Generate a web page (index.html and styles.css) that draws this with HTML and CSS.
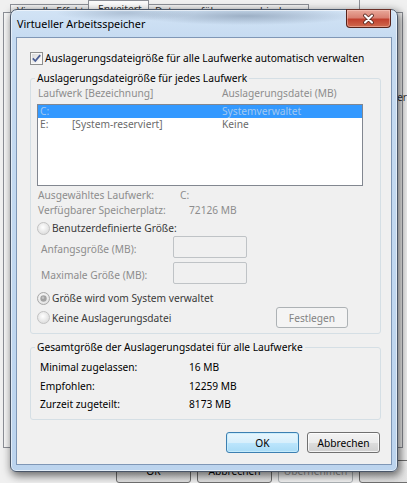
FILE: index.html
```html
<!DOCTYPE html>
<html lang="de">
<head>
<meta charset="utf-8">
<title>Virtueller Arbeitsspeicher</title>
<link rel="stylesheet" href="styles.css">
</head>
<body>
<div class="desk">
  <div class="behind">
    <div class="tabs">
      <div class="tab t1">Visuelle Effekte</div>
      <div class="tab t2 tab-sel">Erweitert</div>
      <div class="tab t3">Datenausführungsverhinderung</div>
      <div class="tab-gap"></div>
    </div>
    <div class="page"></div>
    <div class="behind-buttons">
      <div class="bbtn">OK</div>
      <div class="bbtn">Abbrechen</div>
      <div class="bbtn bdis">Übernehmen</div>
      <div class="bbtn"></div>
    </div>
    <span class="peek">er</span>
  </div>

  <div class="window">
    <div class="titlebar">
      <span class="title">Virtueller Arbeitsspeicher</span>
      <div class="close">
        <svg width="15" height="12" viewBox="0 0 15 12">
          <path d="M4 2.5 L11 9.5 M11 2.5 L4 9.5" stroke="#5a2a22" stroke-width="3.8" stroke-linecap="round" fill="none"/>
          <path d="M4 2.5 L11 9.5 M11 2.5 L4 9.5" stroke="#ffffff" stroke-width="2.1" stroke-linecap="round" fill="none"/>
        </svg>
      </div>
    </div>
    <div class="client">
      <div class="check-row">
        <svg class="chk" width="13" height="13" viewBox="0 0 13 13">
          <defs>
            <linearGradient id="cg1" x1="0" y1="0" x2="1" y2="1">
              <stop offset="0" stop-color="#d9d9d9"/>
              <stop offset="1" stop-color="#fdfdfd"/>
            </linearGradient>
          </defs>
          <rect x="0.5" y="0.5" width="12" height="12" fill="#f7f7f7" stroke="#8e8f8f"/>
          <rect x="2" y="2" width="9" height="9" fill="url(#cg1)"/>
          <path d="M2.8 6.4 L5.3 9 L10.2 3.1" fill="none" stroke="#4b5e94" stroke-width="1.8"/>
        </svg>
        <span>Auslagerungsdateigröße für alle Laufwerke automatisch verwalten</span>
      </div>

      <fieldset class="group g1">
        <legend>Auslagerungsdateigröße für jedes Laufwerk</legend>
        <div class="head">
          <span class="h1">Laufwerk [Bezeichnung]</span>
          <span>Auslagerungsdatei (MB)</span>
        </div>
        <div class="list">
          <div class="row sel"><span class="c1">C:</span><span class="c2"></span><span>Systemverwaltet</span></div>
          <div class="row"><span class="c1">E:</span><span class="c2">[System-reserviert]</span><span>Keine</span></div>
        </div>
        <div class="info first"><span class="lbl">Ausgewähltes Laufwerk:</span><span>C:</span></div>
        <div class="info"><span class="lbl">Verfügbarer Speicherplatz:</span><span class="v2">72126 MB</span></div>

        <div class="radio-row r1">
          <svg width="13" height="13" viewBox="0 0 13 13">
            <defs>
              <radialGradient id="rg1" cx="0.45" cy="0.4" r="0.6">
                <stop offset="0" stop-color="#ffffff"/>
                <stop offset="1" stop-color="#dcdcdc"/>
              </radialGradient>
            </defs>
            <circle cx="6.5" cy="6.5" r="6" fill="url(#rg1)" stroke="#c2c2c2"/>
          </svg>
          <span>Benutzerdefinierte Größe:</span>
        </div>
        <div class="field f1"><span class="flbl">Anfangsgröße (MB):</span><div class="input"></div></div>
        <div class="field f2"><span class="flbl">Maximale Größe (MB):</span><div class="input"></div></div>
        <div class="radio-row r2">
          <svg width="13" height="13" viewBox="0 0 13 13">
            <defs>
              <radialGradient id="rg2" cx="0.45" cy="0.4" r="0.6">
                <stop offset="0" stop-color="#ffffff"/>
                <stop offset="1" stop-color="#e0e0e0"/>
              </radialGradient>
            </defs>
            <circle cx="6.5" cy="6.5" r="6" fill="url(#rg2)" stroke="#a8a8a8"/>
            <circle cx="6.5" cy="6.5" r="3.2" fill="#a2a2a2"/>
            <circle cx="6" cy="5.8" r="1.3" fill="#c4c4c4"/>
          </svg>
          <span>Größe wird vom System verwaltet</span>
        </div>
        <div class="radio-row r3">
          <svg width="13" height="13" viewBox="0 0 13 13">
            <defs>
              <radialGradient id="rg3" cx="0.45" cy="0.4" r="0.6">
                <stop offset="0" stop-color="#ffffff"/>
                <stop offset="1" stop-color="#dcdcdc"/>
              </radialGradient>
            </defs>
            <circle cx="6.5" cy="6.5" r="6" fill="url(#rg3)" stroke="#c2c2c2"/>
          </svg>
          <span>Keine Auslagerungsdatei</span>
          <button class="btn btn-dis" disabled>Festlegen</button>
        </div>
      </fieldset>

      <fieldset class="group g2">
        <legend>Gesamtgröße der Auslagerungsdatei für alle Laufwerke</legend>
        <div class="sum"><span class="slbl">Minimal zugelassen:</span><span>16 MB</span></div>
        <div class="sum"><span class="slbl">Empfohlen:</span><span>12259 MB</span></div>
        <div class="sum"><span class="slbl">Zurzeit zugeteilt:</span><span>8173 MB</span></div>
      </fieldset>

      <div class="buttons">
        <button class="btn btn-default">OK</button>
        <button class="btn">Abbrechen</button>
      </div>
    </div>
  </div>
</div>
</body>
</html>
```

FILE: styles.css
```css
* { box-sizing: border-box; }

html, body {
  margin: 0;
  padding: 0;
}

body {
  width: 407px;
  height: 483px;
  overflow: hidden;
  background: #ececec;
  font-family: "Noto Sans", "Open Sans", sans-serif;
  font-size: 10.2px;
  color: #000;
}

.desk {
  position: relative;
  width: 407px;
  height: 483px;
  overflow: hidden;
}

/* ---------- window in the background ---------- */
.behind {
  position: absolute;
  left: 0;
  top: 0;
  width: 407px;
  height: 483px;
  background: #f0f0f0;
  display: flex;
  flex-direction: column;
}

.tabs {
  display: flex;
  align-items: flex-end;
  height: 12px;
  margin-left: 10px;
}

.tab {
  height: 8px;
  border: 1px solid #8c8f96;
  border-bottom: none;
  background: linear-gradient(#f4f4f4, #e4e4e4);
  color: #333;
  line-height: 11px;
  padding-left: 6px;
  padding-top: 1px;
  overflow: hidden;
  white-space: nowrap;
}

.t1 { width: 79px; }
.t2 { width: 61px; margin-left: -1px; }
.t3 { width: 161px; margin-left: -1px; }

.tab-sel {
  height: 12px;
  background: #fbfbfb;
  padding-left: 9px;
  padding-top: 3px;
}

.tab-gap {
  width: 51px;
  height: 12px;
  border-right: 1px solid #8c8f96;
}

.page {
  height: 445px;
  margin-left: 3px;
  margin-right: 4px;
  border: 1px solid #8c8f96;
  background: #f7f7f7;
}

.behind-buttons {
  display: flex;
  gap: 6px;
  margin: 12px 0 0 116px;
}

.bbtn {
  width: 75px;
  height: 23px;
  flex: none;
  border: 1px solid #707070;
  border-radius: 3px;
  background: linear-gradient(#f2f2f2, #e2e2e2);
  text-align: center;
  line-height: 17px;
  padding-top: 2px;
  color: #000;
}

.bdis {
  border-color: #adb2b5;
  color: #9a9a9a;
  background: #f4f4f4;
}

.peek {
  position: absolute;
  left: 397px;
  top: 90px;
  color: #333;
}

/* ---------- dialog window ---------- */
.window {
  position: absolute;
  left: 10px;
  top: 9px;
  width: 388px;
  height: 463px;
  display: flex;
  flex-direction: column;
  border: 1px solid #4a5668;
  border-radius: 7px 7px 6px 6px;
  background:
    radial-gradient(ellipse 110px 9px at 235px 6px, rgba(95, 115, 140, 0.45), rgba(95, 115, 140, 0)),
    radial-gradient(ellipse 70px 8px at 115px 3px, rgba(110, 130, 155, 0.35), rgba(110, 130, 155, 0)),
    linear-gradient(180deg, #d2e3f5 0, #c6dbf1 28px, #bcd4ee 100%);
  box-shadow:
    inset 0 0 0 1px rgba(255, 255, 255, 0.55),
    2px 3px 9px 1px rgba(0, 0, 0, 0.55);
}

.titlebar {
  display: flex;
  align-items: flex-start;
  height: 27px;
  flex: none;
}

.title {
  padding: 7px 0 0 6px;
  line-height: 14px;
  font-size: 10.8px;
  color: #000;
}

.close {
  margin: -1px 6px 0 auto;
  width: 45px;
  height: 19px;
  border: 1px solid #56231b;
  border-top-color: #6b3028;
  border-radius: 0 0 4px 4px;
  background: linear-gradient(180deg, #e9a99b 0%, #d98172 45%, #c2412f 55%, #cf6a4e 100%);
  box-shadow: inset 0 0 0 1px rgba(255, 210, 200, 0.45);
  display: flex;
  align-items: center;
  justify-content: center;
}

.client {
  flex: 1;
  margin: 0 5px 6px 5px;
  border: 1px solid #7f97b6;
  background: #f0f0f0;
  padding: 14px 10px 0 13px;
  display: flex;
  flex-direction: column;
}

.check-row {
  display: flex;
  align-items: center;
  height: 13px;
  line-height: 13px;
  gap: 2px;
}

.chk { flex: none; }

/* ---------- group boxes ---------- */
.group {
  margin: 5px 0 0 0;
  padding: 0;
  min-width: 0;
  border: 1px solid #d5dfe5;
  border-radius: 3px;
}

.group legend {
  padding: 0 2px;
  margin-left: 4px;
  line-height: 16px;
  color: #000;
}

.g1 { padding-bottom: 5px; }

.head {
  display: flex;
  line-height: 15px;
  padding-left: 7px;
  color: #8d8d8d;
}

.head .h1 { width: 184px; }

.list {
  margin: 3px 0 0 6px;
  width: 326px;
  height: 82px;
  border: 1px solid #828790;
  background: #fff;
}

.row {
  display: flex;
  height: 13px;
  line-height: 13px;
  padding-left: 2px;
  color: #6b6b6b;
}

.row.sel {
  background: #3399ff;
  color: #a3c8ef;
}

.row .c1 { width: 32px; }
.row .c2 { width: 150px; }

.info {
  display: flex;
  line-height: 15px;
  padding-left: 7px;
  color: #8d8d8d;
}

.info.first { margin-top: 2px; }

.info .lbl { width: 142px; }
.info .v2 { margin-left: 9px; }

.radio-row {
  display: flex;
  align-items: center;
  gap: 2px;
  margin-left: 6px;
  color: #3a3a3a;
}

.radio-row svg { flex: none; }

.r1 { height: 16px; margin-top: 2px; }
.r2 { height: 16px; margin-top: 6px; }
.r3 { height: 21px; margin-top: 1px; }

.field {
  display: flex;
  align-items: flex-start;
  margin-left: 10px;
  color: #8d8d8d;
}

.f2 { margin-top: 4px; }

.flbl {
  width: 132px;
  padding-top: 6px;
  line-height: 15px;
}

.input {
  width: 74px;
  height: 22px;
  border: 1px solid #bfc3c6;
  border-radius: 2px;
  background: #f0f0f0;
}

/* ---------- buttons ---------- */
.btn {
  width: 73px;
  height: 21px;
  padding: 0;
  font: inherit;
  color: #000;
  border: 1px solid #707070;
  border-radius: 3px;
  background: linear-gradient(180deg, #f3f3f3 0%, #ebebeb 50%, #dddddd 50%, #cfcfcf 100%);
  box-shadow: inset 0 0 0 1px rgba(255, 255, 255, 0.75);
}

.btn-dis {
  margin: 0 32px 0 auto;
  width: 72px;
  border-color: #adb2b5;
  background: #f4f4f4;
  color: #838383;
  box-shadow: none;
}

.btn-default {
  border-color: #3c7fb1;
  background: linear-gradient(180deg, #e8f6fd 0%, #d7effc 50%, #bde6fd 50%, #a8dbf6 100%);
  box-shadow: inset 0 0 0 1px rgba(200, 236, 252, 0.9);
}

.g2 { padding: 0 0 5.5px 0; }

.sum {
  display: flex;
  height: 18.5px;
  line-height: 18.5px;
  padding-left: 9px;
}

.sum:first-of-type { margin-top: 3px; }

.sum .slbl { width: 149px; }

.buttons {
  display: flex;
  justify-content: flex-end;
  gap: 8px;
  margin-top: 12px;
  padding-right: 1px;
}
```
